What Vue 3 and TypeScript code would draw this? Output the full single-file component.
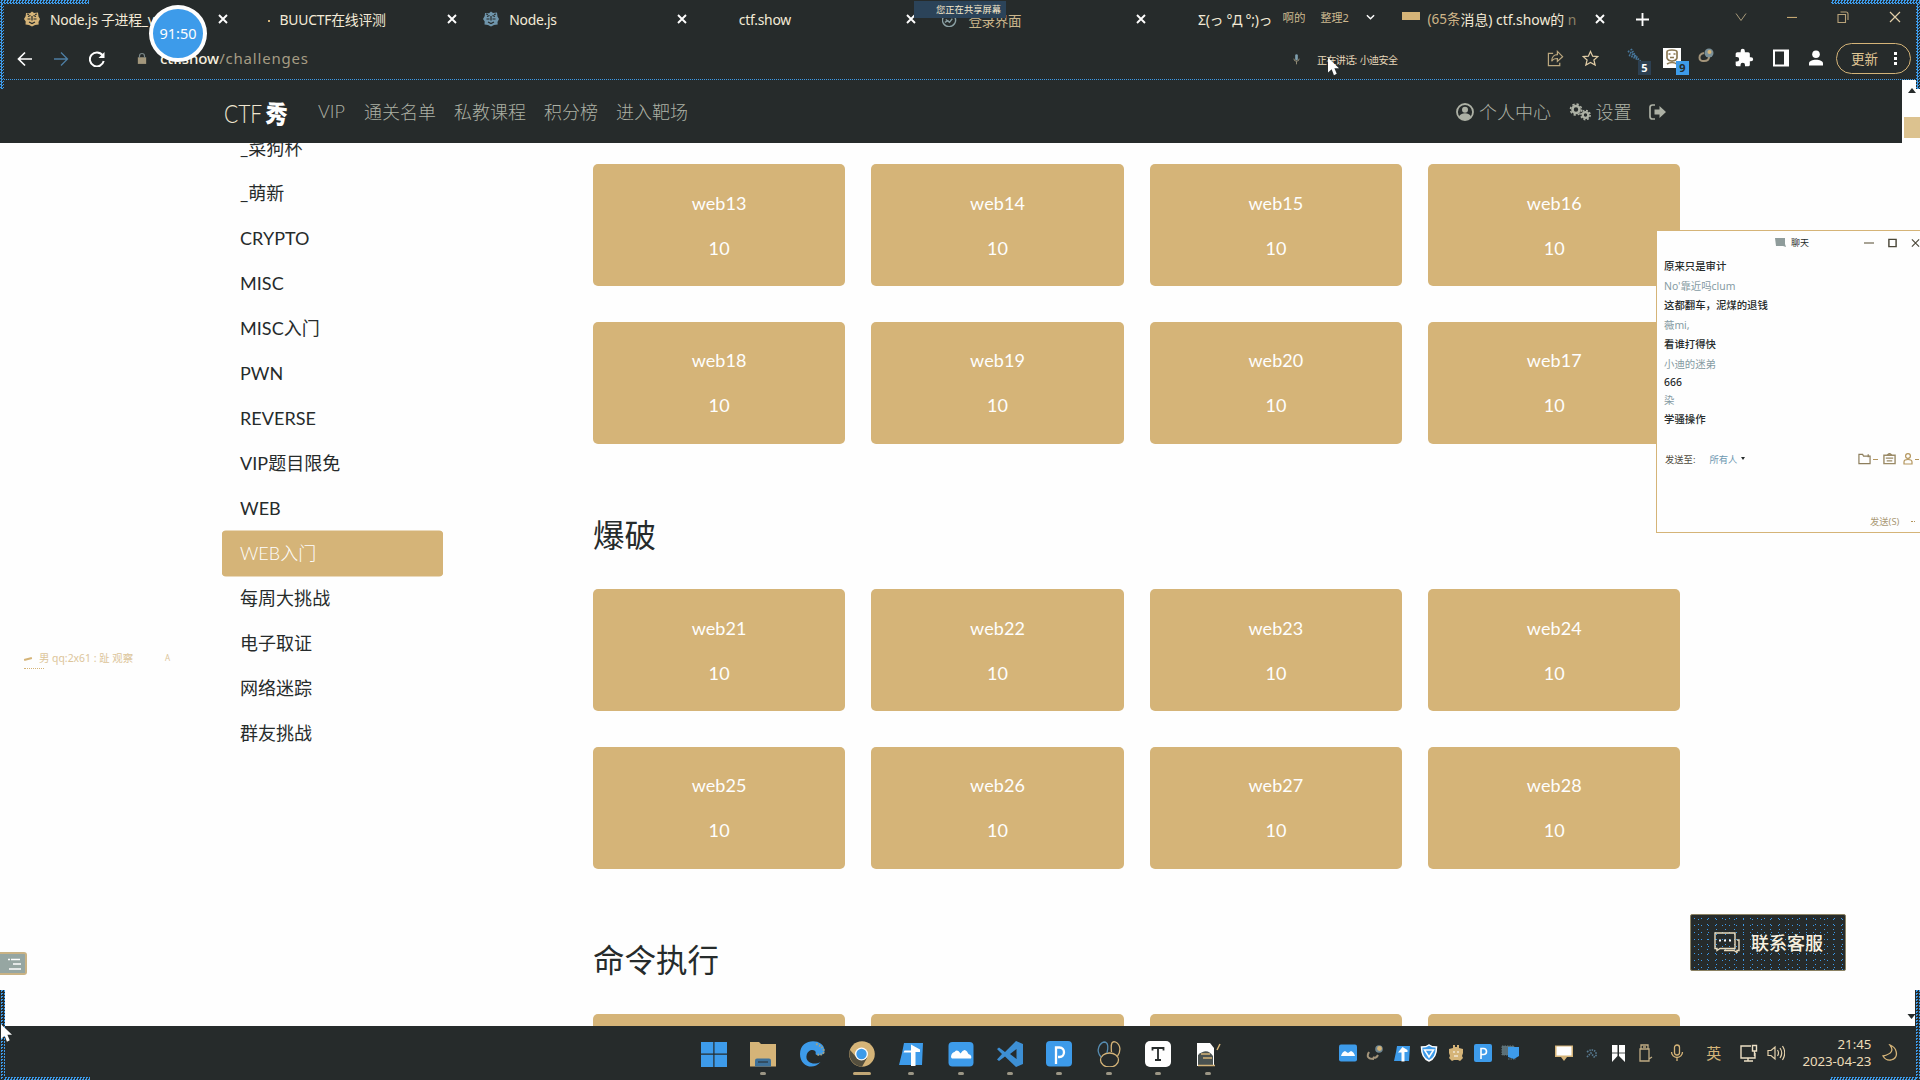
<script setup lang="ts">
interface Tab { title: string; icon: string; close?: boolean }

const tabs: Tab[] = [
  { title: 'Node.js 子进程_v', icon: 'hex', close: true },
  { title: 'BUUCTF在线评测', icon: 'dot', close: true },
  { title: 'Node.js', icon: 'hexblue', close: true },
  { title: 'ctf.show', icon: '', close: true },
  { title: '登录界面', icon: 'globe', close: true },
  { title: 'Σ(っ °Д °;)っ', icon: '' },
  { title: 'ctf', icon: 'flag', close: true },
]

const categories: string[] = [
  '_菜狗杯', '_萌新', 'CRYPTO', 'MISC', 'MISC入门', 'PWN', 'REVERSE',
  'VIP题目限免', 'WEB', 'WEB入门', '每周大挑战', '电子取证', '网络迷踪', '群友挑战',
]
const activeCategory = 'WEB入门'

const sections: { title: string; items: string[] }[] = [
  { title: '', items: ['web13', 'web14', 'web15', 'web16', 'web18', 'web19', 'web20', 'web17'] },
  { title: '爆破', items: ['web21', 'web22', 'web23', 'web24', 'web25', 'web26', 'web27', 'web28'] },
  { title: '命令执行', items: ['', '', '', ''] },
]

const messages: { text: string; name?: boolean; h: number }[] = [
  { text: '原来只是审计', h: 20 },
  { text: "No'靠近吗clum", name: true, h: 20 },
  { text: '这都翻车，泥煤的退钱', h: 19 },
  { text: '薇mi,', name: true, h: 20 },
  { text: '看谁打得快', h: 19 },
  { text: '小迪的迷弟', name: true, h: 20 },
  { text: '666', h: 17 },
  { text: '染', name: true, h: 18 },
  { text: '学骚操作', h: 20 },
]
</script>

<template>
  <div class="screen">
    <header class="tabs">
      <div v-for="(t, i) in tabs" :key="i" class="tab">
        <span class="fav">
          <svg v-if="t.icon === 'hex' || t.icon === 'hexblue'" viewBox="0 0 16 16" width="16" height="16" :class="t.icon">
            <path d="M8 .5 10 2l4-.5.5 4L16 8l-1.500 3 .2 2.500L11 14l-3 1.500L5 14l-3.500-.5.2-3L0 8l1.700-3L2 2l4 .3z" fill="currentColor" />
            <path d="M4 5.500 6.500 4.500M9.500 4.500 12 5.500M3.500 8h3M9.500 8h3M5 11l3 1.500 3-1.500M8 5v4.500M3 3l2 .5M11 3.500l2-.5" stroke="#262b2b" stroke-width="1.200" fill="none" />
          </svg>
          <i v-else-if="t.icon === 'dot'" class="tiny"></i>
          <svg v-else-if="t.icon === 'globe'" viewBox="0 0 16 16" width="15" height="15">
            <path d="M1 6a7 7 0 1 0 13 0M4 8l4 3 3-4M3 11l4-2" fill="none" stroke="#8aa0a4" stroke-width="1.500" />
          </svg>
          <i v-else-if="t.icon === 'flag'" class="flag"></i>
        </span>
        <span v-if="i < 6" class="title" :class="{ under: i === 4 }">{{ t.title }}</span>
        <span v-else class="title last"><span class="up">(65条</span>消息) ctf.show的 <span class="fade">n</span></span>
        <svg v-if="t.close" class="x" viewBox="0 0 10 10" width="10" height="10"><path d="M1 1l8 8M9 1l-8 8" stroke="#fefefe" stroke-width="1.900" /></svg>
        <span v-if="i === 5" class="meet">啊的<b>整理2</b>
          <svg viewBox="0 0 10 6" width="9" height="6"><path d="M1 1l4 4 4-4" fill="none" stroke="#fefefe" stroke-width="1.600" /></svg>
        </span>
      </div>
      <div class="plus"><svg viewBox="0 0 14 14" width="13" height="13"><path d="M7 0v14M0 7h14" stroke="#fefefe" stroke-width="2" /></svg></div>
      <div class="winctl">
        <svg viewBox="0 0 12 12" width="12" height="12"><path d="M1 2.500l5 7 5-7" fill="none" stroke="#a89a7a" /></svg>
        <svg viewBox="0 0 12 12" width="10" height="12"><path d="M0 6.500h12" stroke="#d5b478" stroke-width="1.200" /></svg>
        <svg viewBox="0 0 12 12" width="12" height="12"><path d="M1 3.500h7.500v8H1zM3.500 1h5.500q2 0 2 2v6" fill="none" stroke="#b8a37a" stroke-width="1.100" /></svg>
        <svg viewBox="0 0 12 12" width="12" height="12"><path d="M1 1l10 10M11 1 1 11" stroke="#e3cfa8" stroke-width="1.200" /></svg>
      </div>
    </header>

    <div class="toolbar">
      <div class="navbtns">
        <svg viewBox="0 0 16 16" width="16" height="16"><path d="M15 8H2M8 1.500 1.500 8 8 14.500" fill="none" stroke="#fefefe" stroke-width="1.700" /></svg>
        <svg viewBox="0 0 16 16" width="16" height="16"><path d="M1 8h13M8 1.500 14.500 8 8 14.500" fill="none" stroke="#4d7ea3" stroke-width="1.300" /></svg>
        <svg viewBox="0 0 16 16" width="16" height="16"><path d="M13.500 4.200A7 7 0 1 0 14.700 10" fill="none" stroke="#fefefe" stroke-width="2" /><path d="M15.500 1v6h-6z" fill="#fefefe" /></svg>
        <svg viewBox="0 0 12 14" width="10" height="13"><path d="M1 5.500h10v8H1z" fill="#a3977c" /><path d="M3 6V4a3 3 0 0 1 6 0v2" fill="none" stroke="#7a8687" stroke-width="1.400" /></svg>
      </div>
      <div class="url"><b>ctf.show</b>/challenges</div>
      <div class="talk">
        <svg viewBox="0 0 8 12" width="7" height="11"><rect x="2.500" y="0" width="3" height="7" rx="1.500" fill="#7f9fae" /><path d="M1 5a3 3 0 0 0 6 0M4 8v3.500" fill="none" stroke="#a0987f" /></svg>
        <span>正在讲话: 小迪安全</span>
      </div>
      <div class="exts">
        <svg viewBox="0 0 18 18" width="17" height="17"><path d="M6.500 3.500H1.500v13h12v-3M5 12c0-5 3-7 6-7V1.500L16.500 7 11 12V9c-3 0-5 1-6 3z" fill="none" stroke="#bba77e" stroke-width="1.300" /></svg>
        <svg class="star" viewBox="0 0 18 18" width="17" height="17"><path d="M9 1.500l2.300 5 5.400.5-4.100 3.600 1.300 5.400L9 13.200 4.100 16l1.300-5.400L1.300 7l5.400-.5z" fill="none" stroke="#e1cda6" stroke-width="1.300" /></svg>
        <span class="ext"><svg viewBox="0 0 22 24" width="22" height="24"><path d="M1 3l10 7M2 7l8 4M4 1l5 8M9 9l5 5" stroke="#47779c" stroke-width="2" stroke-dasharray="1.500 1" /></svg><em>5</em></span>
        <span class="ext face"><svg viewBox="0 0 25 25" width="25" height="25"><path d="M1 0h18v20H1z" fill="#fefefe" /><path d="M5 4q0-2 5-2t5 2v6q-1 3-5 3t-5-3zM6.500 6h2M11.500 6h2M8 9.500h4M5 16q5-3 10 0" fill="none" stroke="#8c7a55" stroke-width="1.700" /></svg><em class="blue">9</em></span>
        <svg class="lift" viewBox="0 0 18 18" width="18" height="18"><circle cx="11" cy="6" r="4.500" fill="#7a9099" /><circle cx="11.500" cy="5" r="2" fill="#d5b478" /><path d="M6 6c-6 1-6 9 0 8 4 0 5-2 5-4" fill="none" stroke="#a3947a" stroke-width="2" /></svg>
        <svg viewBox="0 0 24 24" width="20" height="20"><path d="M20.500 11H19V7a2 2 0 0 0-2-2h-4V3.500a2.500 2.500 0 0 0-5 0V5H4a2 2 0 0 0-2 2v3.800h1.500a2.700 2.700 0 0 1 0 5.400H2V20a2 2 0 0 0 2 2h3.800v-1.500a2.700 2.700 0 0 1 5.400 0V22H17a2 2 0 0 0 2-2v-4h1.500a2.500 2.500 0 0 0 0-5z" fill="#fefefe" /></svg>
        <svg viewBox="0 0 18 18" width="18" height="18"><path d="M2 1.500h14v15H2z" fill="none" stroke="#fefefe" stroke-width="2" /><path d="M12 1h5v16h-5z" fill="#fefefe" /></svg>
        <svg class="person" viewBox="0 0 16 16" width="16" height="16"><circle cx="8" cy="4.300" r="3.800" fill="#fefefe" /><path d="M1 15.500v-2C1 8.500 15 8.500 15 13.500v2z" fill="#fefefe" /></svg>
        <span class="pill">更新<i></i></span>
      </div>
    </div>

    <nav class="nav">
      <div class="brand">
        <span>CTF</span><b>秀</b>
      </div>
      <a>VIP</a><a>通关名单</a><a>私教课程</a><a>积分榜</a><a>进入靶场</a>
      <div class="right">
        <svg viewBox="0 0 18 18" width="18" height="18"><circle cx="9" cy="9" r="8" fill="none" stroke="#adb1a5" stroke-width="1.800" /><circle cx="9" cy="6.800" r="3" fill="#adb1a5" /><path d="M3 14c1-5 11-5 12 0-3 3.500-9 3.500-12 0z" fill="#adb1a5" /></svg>
        <a class="me">个人中心</a>
        <svg viewBox="0 0 22 18" width="22" height="18"><g fill="none" stroke="#adb1a5"><circle cx="7" cy="6.500" r="3.500" stroke-width="2.600" /><circle cx="7" cy="6.500" r="5.500" stroke-width="1.600" stroke-dasharray="2.300 2" /><circle cx="16.500" cy="12" r="2.800" stroke-width="2.200" /><circle cx="16.500" cy="12" r="4.600" stroke-width="1.600" stroke-dasharray="1.900 1.700" /></g></svg>
        <a class="set">设置</a>
        <svg viewBox="0 0 18 16" width="18" height="16"><path d="M6 1H3.500Q1 1 1 3.500v9Q1 15 3.500 15H6" fill="none" stroke="#adb1a5" stroke-width="1.700" /><path d="M5.500 5.500h5V2L17 8l-6.500 6v-3.500h-5z" fill="#adb1a5" /></svg>
      </div>
    </nav>

    <main class="page">
      <ul class="side">
        <li v-for="c in categories" :key="c" :class="{ on: c === activeCategory }">{{ c }}</li>
      </ul>
      <div class="content">
        <section v-for="(s, i) in sections" :key="i">
          <h3 v-if="s.title">{{ s.title }}</h3>
          <div class="grid">
            <div v-for="(w, k) in s.items" :key="k" class="card"><template v-if="w"><p>{{ w }}</p><p>10</p></template></div>
          </div>
        </section>
      </div>
    </main>

    <footer class="taskbar">
      <div class="apps">
        <span><svg viewBox="0 0 26 26"><path d="M0 1h12.300v11.600H0zM13.500 1H26v11.600H13.500zM0 13.800h12.300V26H0zM13.500 13.800H26V26H13.500z" fill="#3d9bea" /></svg></span>
        <span class="run"><svg viewBox="0 0 26 26"><path d="M0 1h9l2 2h15v22.500H0z" fill="#d5b478" /><path d="M5 25.500v-6q0-2 2-2h12q2 0 2 2v6z" fill="#3e7199" /><path d="M8 21h10" stroke="#262b2b" /></svg></span>
        <span><svg viewBox="0 0 26 26"><path d="M1 13C1-4 26-3 25.500 10c0 5-8 5-9 3 2-5-8-6-9 2-1 6 7 10 14 6C14 30 1 25 1 13z" fill="#3d9bea" /><path d="M17 3q8 3 8 8-2 4-8 2" fill="none" stroke="#a8a27f" stroke-width="2" stroke-dasharray="1.500 1.500" /></svg></span>
        <span class="run wide"><svg viewBox="0 0 26 26"><circle cx="13" cy="13" r="12.800" fill="#d5b478" /><path d="M1 9a13 13 0 0 0 12 16.800L18 17 8 17z" fill="#544f3e" /><circle cx="12.500" cy="13" r="6.500" fill="#fefefe" /><circle cx="12.500" cy="13" r="5.200" fill="#3d9bea" /></svg></span>
        <span class="run"><svg viewBox="0 0 26 26"><path d="M6 2h19l-1 22H1l3-12z" fill="#3d9bea" /><path d="M13 3.500 22 8.500v2.500h-4.500V25h-4.500V11.500H5.500l1-2H13z" fill="#fefefe" /></svg></span>
        <span class="run"><svg viewBox="0 0 26 26"><rect x=".5" y="1" width="25" height="24.500" rx="4" fill="#3d9bea" /><path d="M3 15.500q.5-4 3.500-4.500 3-3.500 6 1.500 3.500-6 6.500-2 1 3 3.500 3.500 1.500 2 .5 3.500H4q-1-.5-1-2z" fill="#fefefe" /></svg></span>
        <span class="run"><svg viewBox="0 0 26 26"><path d="M19 0l7 3v20l-7 3L8 15.500 2 20 0 18.500 5 13 0 8l2-1.500 6 4.500zm.5 8-6.500 5 6.500 5z" fill="#3d8fd4" /></svg></span>
        <span class="run"><svg viewBox="0 0 26 26"><rect width="26" height="25.500" rx="4" fill="#3d9bea" /><path d="M10 23V6.500h3.500c6 0 6 9.500 0 9.500H12" fill="none" stroke="#fefefe" stroke-width="2.300" /></svg></span>
        <span class="run"><svg viewBox="0 0 26 26"><g fill="none" stroke="#d5b478" stroke-width="1.300"><ellipse cx="13.500" cy="19" rx="9" ry="7" /><path d="M15.500 11c-1-10 1-11 4-10 6 3 5 10 2 14" /><path d="M5 16C-1 9 4 2 8 1c5 0 4 7 3 11" stroke="#568cb1" /></g></svg></span>
        <span class="run"><svg viewBox="0 0 26 26"><rect width="26" height="26" rx="5" fill="#fefefe" /><path d="M7.500 9.500V7h11v2.500M13 7v12M10 19h6" fill="none" stroke="#262b2b" stroke-width="1.800" /></svg></span>
        <span class="run"><svg viewBox="0 0 26 26"><path d="M2 2h13l4 5v18H2z" fill="#fefefe" /><path d="M3 14q9-8 15 1v9H3z" fill="#4a5251" /><path d="M3 24.500h17M22 9l3-6M6 13h9M8 17h9" stroke="#d5b478" stroke-width="1.500" /></svg></span>
      </div>
      <div class="tray">
        <svg viewBox="0 0 18 18"><rect y=".5" width="18" height="17" rx="2" fill="#3d9bea" /><path d="M2 12q1-4 4-5l3 2 3-2q3 1 4 5z" fill="#fefefe" /></svg>
        <svg viewBox="0 0 18 18"><path d="M3 8q-4 7 5 7M7 13q3 2 5-2" fill="none" stroke="#a3947a" stroke-width="2" /><circle cx="13" cy="5" r="3.800" fill="#6f8793" /><circle cx="13.500" cy="4.500" r="2.400" fill="#d5b478" /></svg>
        <svg viewBox="0 0 18 18"><path d="M4 2h13l-1 15H1l2-9z" fill="#3d9bea" /><path d="M9.500 3l5 3v2h-3v9.500h-3V8.500H5z" fill="#fefefe" /></svg>
        <svg viewBox="0 0 18 18"><path d="M1.500 3q5 0 7.500-2 2.500 2 7.500 2 0 11-7.500 14Q1.500 14 1.500 3z" fill="#3d9bea" stroke="#fefefe" stroke-width="1.500" /><path d="M4.500 6h9L9 13z" fill="none" stroke="#fefefe" stroke-width="1.500" /></svg>
        <svg viewBox="0 0 18 18"><path d="M6 4V1h2v2h2V1h2v3l4 1v4l-1 3 1 2-3 3-2-1H7l-2 1-3-3 1-2-1-3V5z" fill="#d5b478" /><path d="M6 8h2M10 8h2M7 12h4" stroke="#fefefe" /></svg>
        <svg viewBox="0 0 18 18"><rect width="18" height="18" rx="2" fill="#3d9bea" /><path d="M7 15V4.500h2.500c4 0 4 6 0 6H7" fill="none" stroke="#fefefe" stroke-width="1.600" /></svg>
        <svg viewBox="0 0 18 18"><path d="M1 2h12v9H1zM7 15h8" fill="#5b7078" stroke="#64787c" stroke-dasharray="1.500 1" /><path d="M7 3h11v9l-5 3-6-2z" fill="#3d9bea" /></svg>
        <svg class="gap1" viewBox="0 0 18 18"><path d="M0 1.500h18v11.500h-6l-3 4-3-4H0z" fill="#d5b478" /><path d="M1.500 2.500h15v9h-15z" fill="#fefefe" /></svg>
        <svg viewBox="0 0 18 18"><path d="M5 8q5-4 9 0v5M5 13l4-4 4 5" fill="none" stroke="#587a91" stroke-width="1.700" stroke-dasharray="1.500 1" /></svg>
        <svg viewBox="0 0 18 18"><path d="M3 1h5.500v11L3 18zM10 1h6v17l-6-6z" fill="#fefefe" /><path d="M3 9h13" stroke="#262b2b" stroke-width=".8" /></svg>
        <svg viewBox="0 0 18 18"><path d="M5 5V1h7v4M4 5h9v12H4zM13 15l3-2M7 3h3" fill="none" stroke="#c0ac84" stroke-width="1.300" /></svg>
        <svg class="mic" viewBox="0 0 18 18"><rect x="6.500" y="1" width="5" height="10" rx="2.500" fill="none" stroke="#d5b478" stroke-width="1.300" /><path d="M3.500 8a5.500 5.500 0 0 0 11 0M9 13.500V17" fill="none" stroke="#d5b478" stroke-width="1.300" /></svg>
        <em>英</em>
        <svg class="gap2" viewBox="0 0 18 18"><path d="M11 2H1v12h14V9M4 17h9M8 14v3M12.500 1.500h4V7h-4zM14.500 7v5" fill="none" stroke="#ecdfc5" stroke-width="1.400" /></svg>
        <svg viewBox="0 0 18 18"><path d="M1 6.500h3L8 3v12l-4-3.500H1zM10.500 6q2 3 0 6M13 4q3.500 5 0 10M15.500 2q4.500 7 0 14" fill="none" stroke="#e4d1ab" stroke-width="1.200" /></svg>
        <div class="clock"><span>21:45</span><span>2023-04-23</span></div>
        <svg class="moon" viewBox="0 0 18 18"><path d="M9 1q6 8-7 11 3 5 8 4 7-2 5-9-1-4-6-6z" fill="none" stroke="#d5b478" stroke-width="1.300" /></svg>
      </div>
    </footer>

    <!-- floating layers -->
    <i class="edge tl"></i><i class="edge tl2"></i><i class="edge tr"></i><i class="edge tr2"></i>
    <i class="edge dark bl"></i><i class="edge bl2"></i><i class="edge dark br"></i><i class="edge br2"></i>
    <div class="rail"></div>
    <svg class="arrow up1" viewBox="0 0 8 5" width="8" height="5"><path d="M0 5 4 0l4 5z" fill="#262b2b" /></svg>
    <svg class="arrow dn" viewBox="0 0 8 5" width="9" height="5"><path d="M0 0h8L4 5z" fill="#262b2b" /></svg>

    <div class="timer">91:50</div>
    <div class="sharing">您正在共享屏幕</div>
    <div class="ghost"><i></i><span>男 qq:2x61 : 趾 观察</span><span>А</span></div>
    <div class="drawer"><svg viewBox="0 0 14 12" width="14" height="12"><path d="M0 1.500h2M3 1.500h9M5 6h8M1 11h12" stroke="#fefefe" stroke-width="1.500" /></svg></div>

    <aside class="chat">
      <div class="chat-head">
        <svg viewBox="0 0 11 10" width="11" height="10"><path d="M0 0h10v6l1 3-3-1H1z" fill="#8f9c9b" /></svg>
        <span>聊天</span>
        <div class="cw">
          <svg viewBox="0 0 10 10" width="10" height="10"><path d="M0 5h10" stroke="#6e664f" stroke-width="1.200" /></svg>
          <svg viewBox="0 0 10 10" width="9" height="10"><path d="M1 1h8v8H1z" fill="none" stroke="#4b4739" stroke-width="1.600" /></svg>
          <svg viewBox="0 0 10 10" width="9" height="10"><path d="M1 1l8 8M9 1 1 9" stroke="#4b4739" stroke-width="1.300" /></svg>
        </div>
      </div>
      <div class="msgs">
        <p v-for="m in messages" :key="m.text" :class="{ name: m.name }" :style="{ height: m.h + 'px', lineHeight: m.h + 'px' }">{{ m.text }}</p>
      </div>
      <div class="to">
        <span>发送至:</span><span class="all">所有人</span><i class="car"></i>
        <div class="ti">
          <svg viewBox="0 0 14 12" width="13" height="12"><path d="M1 1h4l1 2h7v8H1zM11 1v3" fill="none" stroke="#8d7e5c" stroke-width="1.300" /></svg><i class="dash"></i>
          <svg viewBox="0 0 14 12" width="13" height="12"><path d="M1 2h12v9H1zM4 2l3-2 3 2M3 5h8M4 8h6" fill="none" stroke="#9a8a66" stroke-width="1.500" /></svg>
          <svg viewBox="0 0 10 12" width="10" height="12"><circle cx="5" cy="3" r="2.400" fill="none" stroke="#b3955c" stroke-width="1.200" /><path d="M1 11V9q0-2.500 4-2.500T9 9v2z" fill="none" stroke="#b3955c" stroke-width="1.200" /></svg><i class="dash end"></i>
        </div>
      </div>
      <div class="send">发送(S)<i></i></div>
    </aside>

    <div class="service">
      <svg viewBox="0 0 26 21" width="26" height="21"><path d="M1 1h20v15.500H6L3 18.500v-2H1zM23 8h2v10.500h-2v2l-3-2H10" fill="none" stroke="#e9dbbd" stroke-width="1.400" /><path d="M5 8.500h2M10 8.500h2M15 8.500h2" stroke="#fefefe" stroke-width="2" /></svg>
      <span>联系客服</span>
    </div>

    <svg class="cur c1" viewBox="0 0 12 19" width="11" height="19"><path d="M0 0v16l4-3.500L6.500 19l3-1.500L7 11.500h5z" fill="#fefefe" /></svg>
    <svg class="cur c2" viewBox="0 0 12 19" width="11" height="18"><path d="M0 0v16l4-3.500L6.500 19l3-1.500L7 11.500h5z" fill="#fefefe" /></svg>
  </div>
</template>

<style>
html, body { margin: 0; overflow: hidden; background: #fefefe; }
</style>

<style scoped>
* { box-sizing: border-box; }
.screen { position: relative; width: 1920px; height: 1080px; overflow: hidden; display: flex; flex-direction: column; background: #fefefe; color: #262b2b; font-family: Lato, "Noto Sans CJK SC", sans-serif; font-size: 18px; }
svg { display: block; flex: none; }

.tabs { height: 38px; background: #262b2b; display: flex; align-items: center; padding-left: 12px; color: #f3ead7; font: 14px "Noto Sans", "Noto Sans CJK SC", sans-serif; flex: none; white-space: nowrap; }
.tab { width: 229.6px; height: 38px; display: flex; align-items: center; padding-left: 12px; position: relative; flex: none; }
.fav { width: 26px; display: flex; }
.hex { color: #d5b478; }
.hexblue { color: #6f95ab; }
.tiny { width: 2px; height: 2px; background: #d5b478; margin: 4px 0 0 14px; }
.flag { width: 18px; height: 8px; background: #d5b478; margin-top: -6px; }
.title { flex: 1; font-size: 13.9px; letter-spacing: -.25px; }
.title.under { padding-top: 1px; font-size: 13.5px; color: #cbb68b; }
.title .up { position: relative; top: -1px; font-size: 13.500px; color: #cfb588; }
.title.last { letter-spacing: 0; }
.fade { color: #8c8268; }
.x { margin-right: 14px; }
.meet { width: 107px; display: flex; align-items: center; font-size: 11.500px; color: #cdb98f; margin-top: -5px; }
.meet b { font-weight: 400; font-size: 11px; margin: 0 17px 0 15px; }
.plus { margin-left: 17px; }
.winctl { margin-left: auto; display: flex; align-items: center; gap: 40px; padding-right: 19px; margin-top: -5px; }

.toolbar { height: 42px; background: #262b2b; display: flex; align-items: center; flex: none; padding-left: 17px; background-image: repeating-linear-gradient(90deg, #3d9bea 0 1px, #262b2b 1px 2px); background-size: 100% 1px; background-position: 0 41px; background-repeat: no-repeat; font-family: "Noto Sans", "Noto Sans CJK SC", sans-serif; }
.navbtns { display: flex; align-items: center; width: 143px; gap: 20px; margin-top: -1px; }
.navbtns svg:last-child { margin-left: 12px; }
.url { width: 1130px; font-size: 15px; color: #a59c84; letter-spacing: .8px; margin-top: -2px; }
.url b { font-weight: 500; color: #f6efdf; letter-spacing: -.1px; }
.talk { display: flex; align-items: center; gap: 17px; font-size: 10px; color: #e6d8ba; white-space: nowrap; margin-left: 3px; letter-spacing: -.6px; word-spacing: 1px; }
.exts { margin-left: auto; display: flex; align-items: center; padding-right: 9px; margin-top: -2px; }
.exts > svg { margin-right: 18px; }
.exts > .star { margin-right: 25px; }
.exts > .person { margin-right: 12px; }
.exts > .lift { margin-top: -4px; }
.ext { position: relative; width: 22px; height: 24px; margin: 4px 12px 0 3px; }
.ext.face svg { margin-left: -2px; }
.ext em { position: absolute; right: -2px; bottom: -3px; width: 13px; height: 14px; font: bold 11px/14px "Noto Sans"; text-align: center; color: #fefefe; background: #2d4052; }
.ext em.blue { background: #3d9bea; color: #262b2b; right: -3px; }
.pill { width: 75px; height: 31px; border: 1.300px solid #d5b478; border-radius: 16px; font-size: 13.500px; color: #e0c795; padding-left: 14px; display: flex; align-items: center; }
.pill i { width: 3px; height: 15px; margin-left: 16px; background: radial-gradient(circle, #fefefe 0 1.500px, transparent 1.700px) 0 0 / 3px 5px; }

.nav { height: 63px; width: 1902px; background: #262b2b; flex: none; display: flex; align-items: center; padding-left: 224px; color: #adb1a5; }
.nav a { margin: -1px 18px 0 0; font-weight: 300; }
.nav a:first-of-type { margin-right: 19px; }
.brand { width: 94px; display: flex; align-items: center; color: #f0e6d0; margin-top: 2px; }
.brand span { font-weight: 300; font-size: 25px; transform: scaleX(.84); transform-origin: left; width: 40px; }
.brand b { color: #fefefe; font-size: 25px; line-height: 26px; font-weight: 900; transform: scaleX(.88) rotate(6deg); }
.right { margin-left: auto; display: flex; align-items: center; padding-right: 235px; }
.right a.me, .right a.set { margin: -1px 17.500px 0 5px; }

.page { height: 883px; overflow: hidden; display: flex; flex: none; padding-left: 222px; }
.side { list-style: none; margin: -17px 150px 0 0; padding: 0; width: 221px; flex: none; }
.side li { height: 45px; line-height: 45px; padding-left: 18px; white-space: nowrap; letter-spacing: .04px; }
.side li.on { background: #d5b478; color: #fefefe; border-radius: 4px; font-weight: 300; box-shadow: 0 -.5px #d5b478, 0 .5px #d5b478; }
.content { width: 1087px; padding-top: 21px; }
.grid { display: grid; grid-template-columns: repeat(4, 252.300px); column-gap: 26.100px; row-gap: 35.500px; }
.card { height: 122px; background: #d5b478; border-radius: 5px; color: #fefefe; text-align: center; padding-top: 25.500px; letter-spacing: .1px; }
.card p { margin: 0 0 18px; line-height: 27px; }
h3 { margin: 0; height: 145.500px; padding-top: 71px; line-height: 40px; font-size: 31.500px; font-weight: 400; }

.taskbar { height: 54px; background: #262b2b; flex: none; display: flex; align-items: center; padding-left: 689px; }
.apps { display: flex; }
.apps span { width: 49.400px; height: 54px; display: flex; justify-content: center; padding-top: 15px; position: relative; }
.apps svg { width: 26px; height: 26px; }
.run::after { content: ""; position: absolute; bottom: 5px; width: 6px; height: 3px; border-radius: 2px; background: #9b9685; }
.run.wide::after { width: 18px; background: #c1a776; }
.tray { margin-left: 107px; display: flex; align-items: center; }
.tray svg { width: 18px; height: 18px; margin-right: 9px; margin-top: -1px; }
.tray .gap1 { margin-left: 27px; }
.tray .mic { margin-left: 5px; }
.tray em { font: 15px "Noto Sans CJK SC", sans-serif; color: #d5b478; margin: -2px 18px 0 11px; }
.tray .gap2 { margin-left: 1px; }
.clock { width: 77px; text-align: right; display: flex; flex-direction: column; font: 13.300px/17px "Noto Sans", sans-serif; color: #ecdcb8; letter-spacing: -.05px; margin-top: -1px; white-space: nowrap; }
.tray .moon { margin: 0 0 0 10px; }

.edge { position: absolute; background: repeating-conic-gradient(#3d9bea 0 25%, #262b2b 0 50%) 0 0 / 3px 3px; }
.edge.dark { background: repeating-conic-gradient(#3d9bea 0 25%, #262b2b 0 100%) 0 0 / 3px 3px; }
.tl { left: 0; top: 0; width: 89px; height: 4px; }
.tl2 { left: 0; top: 4px; width: 4px; height: 85px; }
.tr { right: 0; top: 0; width: 89px; height: 4px; }
.tr2 { right: 0; top: 4px; width: 4px; height: 85px; }
.bl { left: 0; top: 990px; width: 5px; height: 90px; }
.bl2 { left: 4px; bottom: 0; width: 86px; height: 3px; }
.br { right: 0; top: 990px; width: 5px; height: 90px; }
.br2 { right: 4px; bottom: 0; width: 86px; height: 3px; }
.rail { position: absolute; left: 1904px; top: 117px; width: 16px; height: 21px; background: #dcc28f; }
.arrow { position: absolute; }
.up1 { left: 1908px; top: 88px; }
.dn { left: 1907px; top: 1014px; }
.timer { position: absolute; left: 149px; top: 5px; width: 58px; height: 57px; border: 4px solid #fefefe; border-radius: 50%; background: #3d9bea; color: #fefefe; font: 14.500px/48px "Noto Sans", sans-serif; text-align: center; }
.sharing { position: absolute; left: 914px; top: 1px; width: 92px; height: 17px; background: #2b4359; color: #f3e6c9; font: 9.300px/16px "Noto Sans CJK SC", sans-serif; padding-left: 22px; white-space: nowrap; }
.ghost { position: absolute; left: 24px; top: 650px; width: 146px; display: flex; gap: 7px; color: #dcc59a; font: 10.400px/16px "Noto Sans", "Noto Sans CJK SC", sans-serif; }
.ghost i { width: 8px; height: 2px; margin-top: 8px; background: #d5b478; transform: rotate(-14deg); }
.ghost span:last-child { margin-left: auto; font-size: 8px; }
.ghost::after { content: ""; position: absolute; left: 0; top: 18px; width: 20px; border-top: 1px dotted #d5b478; }
.drawer { position: absolute; left: 0; top: 952px; width: 27px; height: 23px; border-radius: 0 3px 3px 0; background: #96a6a2; border: 2px solid #c9b284; border-left: 0; padding: 4px 0 0 8px; }

.chat { position: absolute; left: 1656px; top: 230px; width: 264px; height: 303px; background: #fefefe; border: 1px solid #d5b478; border-right: 0; font: 10.400px "Noto Sans", "Noto Sans CJK SC", sans-serif; padding-left: 7px; }
.chat-head { height: 25px; display: flex; align-items: center; padding: 0 0 2px 111px; gap: 5px; font-size: 9px; }
.cw { margin-left: auto; display: flex; gap: 14px; }
.msgs p { margin: 0; white-space: nowrap; font-weight: 500; }
.msgs .name { color: #859ba3; font-weight: 400; }
.to { margin-top: 20px; height: 20px; display: flex; align-items: center; font-size: 9.300px; color: #4d493b; padding-left: 1px; }
.all { margin-left: 14px; color: #6c97b0; }
.car { width: 0; margin-left: 4px; border: 2px solid transparent; border-top: 3px solid #262b2b; }
.ti { margin-left: auto; display: flex; align-items: center; margin-right: 1px; }
.ti svg:nth-of-type(2) { margin: 0 7px 0 5px; }
.dash { width: 5px; height: 1px; margin-left: 2px; background: #b3955c; }
.dash.end { width: 4px; }
.send { margin-top: 45px; font-size: 9.300px; color: #a99874; padding-left: 206px; display: flex; align-items: center; gap: 12px; white-space: nowrap; }
.send i { width: 4px; border-top: 1px dotted #b3955c; }

.service { position: absolute; left: 1690px; top: 914px; width: 156px; height: 57px; background-color: #262b2b; background-image: radial-gradient(circle, #3d9bea 0 .4px, transparent .7px), radial-gradient(circle, #3d9bea 0 .4px, transparent .7px); background-size: 7px 7px, 9px 5px; background-position: 0 0, 3px 2px; border: 1px solid #8b8263; border-radius: 2px; display: flex; align-items: center; padding: 0 0 1px 23px; gap: 11px; color: #f8f0df; font-weight: 500; font-size: 18px; white-space: nowrap; }
.cur { position: absolute; }
.c1 { left: 1328px; top: 57px; }
.c2 { left: 1px; top: 1024px; }
</style>
